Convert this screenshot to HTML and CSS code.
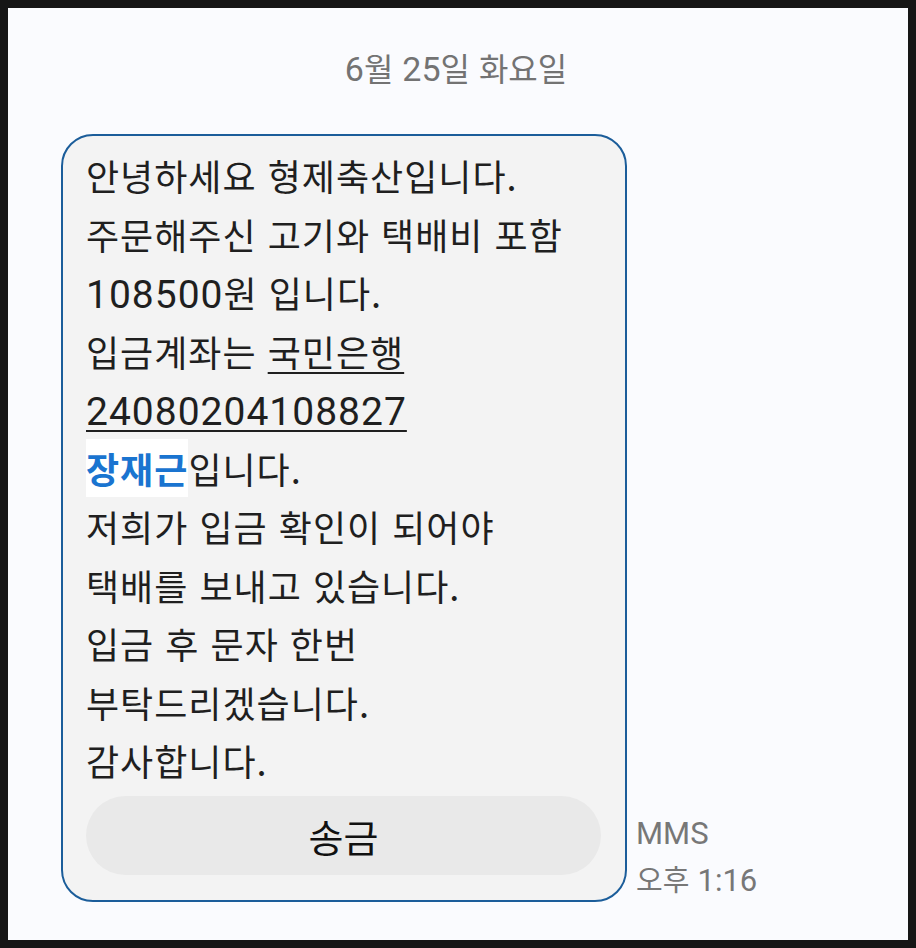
FILE: index.html
```html
<!DOCTYPE html>
<html lang="ko">
<head>
<meta charset="utf-8">
<link rel="stylesheet" href="styles.css">
</head>
<body>
<div class="screen">
  <div class="date"><span class="dnum">6</span>월 <span class="dnum">25</span>일 화요일</div>
  <div class="row">
    <div class="bubble">
      <div class="msg">
        <div class="line">안녕하세요 형제축산입니다.</div>
        <div class="line">주문해주신 고기와 택배비 포함</div>
        <div class="line"><span class="num">108500</span>원 입니다.</div>
        <div class="line">입금계좌는 <span class="link">국민은행</span></div>
        <div class="line"><span class="link num">24080204108827</span></div>
        <div class="line"><span class="name">장재근</span>입니다.</div>
        <div class="line">저희가 입금 확인이 되어야</div>
        <div class="line">택배를 보내고 있습니다.</div>
        <div class="line">입금 후 문자 한번</div>
        <div class="line">부탁드리겠습니다.</div>
        <div class="line">감사합니다.</div>
      </div>
      <div class="btn">송금</div>
    </div>
    <div class="meta">
      <div class="meta-line"><span class="mlat">MMS</span></div>
      <div class="meta-line">오후 <span class="mlat">1:16</span></div>
    </div>
  </div>
</div>
</body>
</html>
```
FILE: styles.css
```css
html, body {
  margin: 0;
  padding: 0;
  background: #161616;
}
body {
  padding: 8px;
  font-family: "Noto Sans CJK KR", "Noto Sans", sans-serif;
}
.screen {
  width: 900px;
  height: 932px;
  background: #fafbfe;
  box-sizing: border-box;
  padding-top: 39px;
}
.date {
  text-align: center;
  height: 40px;
  font-size: 32px;
  line-height: 40px;
  color: #737373;
  padding-right: 4px;
}
.dnum {
  font-family: "Roboto", "Noto Sans", sans-serif;
  font-size: 34px;
  line-height: 1;
}
.row {
  margin-top: 47px;
  padding-left: 53px;
  display: flex;
  align-items: flex-end;
  gap: 9px;
}
.bubble {
  width: 566px;
  box-sizing: border-box;
  border: 2px solid #1b5d9a;
  border-radius: 32px;
  background: #f3f3f3;
  padding: 10px 24px 25px 23px;
}
.msg {
  font-size: 36px;
  line-height: 58.5px;
  letter-spacing: 1px;
  color: #1f1f1f;
}
.line {
  white-space: nowrap;
  height: 58.5px;
}
.num {
  font-family: "Roboto", "Noto Sans", sans-serif;
  font-size: 39px;
  letter-spacing: 1px;
}
.link {
  text-decoration: underline;
  text-decoration-thickness: 2px;
  text-underline-offset: 5px;
}
.name {
  display: inline-block;
  background: #ffffff;
  color: #1a74d0;
  font-weight: 700;
}
.btn {
  margin-top: 6px;
  height: 79px;
  border-radius: 40px;
  background: #e9e9e9;
  display: flex;
  align-items: center;
  justify-content: center;
  font-size: 38px;
  color: #111;
}
.meta {
  font-size: 29px;
  line-height: 47px;
  color: #777;
}
.mlat {
  font-family: "Roboto", "Noto Sans", sans-serif;
  font-size: 31px;
  line-height: 1;
}
```
